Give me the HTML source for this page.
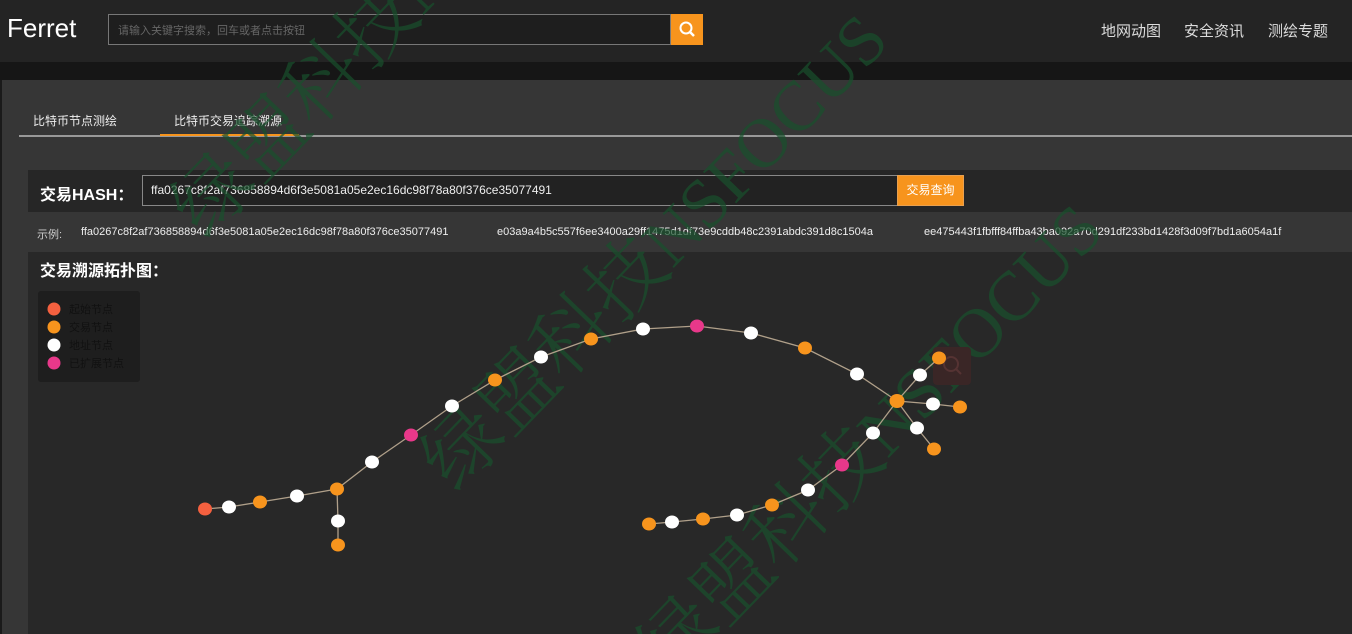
<!DOCTYPE html>
<html><head><meta charset="utf-8"><style>
*{margin:0;padding:0;box-sizing:border-box}
html,body{width:1352px;height:634px;overflow:hidden}
body{background:#363636;font-family:"Liberation Sans","Noto Sans CJK SC",sans-serif;position:relative;color:#fff}
.abs{position:absolute}
.hdr{left:0;top:0;width:1352px;height:62px;background:#242424}
.strip{left:0;top:62px;width:1352px;height:18px;background:#161616}
.lb{left:0;top:80px;width:2px;height:554px;background:#1a1a1a}
.wmw{position:absolute;left:0;top:0;width:1352px;height:634px;overflow:hidden;pointer-events:none}
.wm{position:absolute;font-family:"Liberation Serif","Noto Serif CJK SC",serif;font-size:78px;font-weight:300;color:rgba(24,80,44,0.7);white-space:nowrap;transform-origin:0 100%;transform:rotate(-46deg);line-height:1}
.wm span{font-size:70px}
</style></head><body>
<div class="abs hdr"></div>
<div class="abs" style="left:7px;top:13px;font-size:26px;color:#fff">Ferret</div>
<div class="abs" style="left:108px;top:14px;width:563px;height:31px;border:1px solid #777;background:#1e1e1e"></div>
<div class="abs" style="left:118px;top:22px;font-size:11px;color:#666">请输入关键字搜索，回车或者点击按钮</div>
<div class="abs" style="left:671px;top:14px;width:32px;height:31px;background:#f7941d"><svg width="32" height="31"><circle cx="15" cy="14" r="5.5" fill="none" stroke="#fff" stroke-width="2"/><line x1="19" y1="18" x2="23" y2="22" stroke="#fff" stroke-width="2.5"/></svg></div>
<div class="abs" style="left:1101px;top:20px;font-size:15px;color:#ddd">地网动图</div>
<div class="abs" style="left:1184px;top:20px;font-size:15px;color:#ddd">安全资讯</div>
<div class="abs" style="left:1268px;top:20px;font-size:15px;color:#ddd">测绘专题</div>
<div class="abs strip"></div>
<div class="abs lb"></div>
<div class="abs" style="left:33px;top:112px;font-size:12px;color:#eee">比特币节点测绘</div>
<div class="abs" style="left:174px;top:112px;font-size:12px;color:#eee">比特币交易追踪溯源</div>
<div class="abs" style="left:19px;top:135px;width:1333px;height:2px;background:#999"></div>
<div class="abs" style="left:160px;top:134px;width:139px;height:2px;background:#f7941d"></div>
<div class="abs" style="left:28px;top:170px;width:1324px;height:42px;background:#262626"></div>
<div class="abs" style="left:40px;top:181px;font-size:16px;font-weight:bold">交易HASH：</div>
<div class="abs" style="left:142px;top:175px;width:756px;height:31px;border:1px solid #888;background:#222"></div>
<div class="abs" style="left:151px;top:183px;font-size:12px;color:#eee">ffa0267c8f2af736858894d6f3e5081a05e2ec16dc98f78a80f376ce35077491</div>
<div class="abs" style="left:897px;top:175px;width:67px;height:31px;background:#f7941d;border:1px solid #e8a050;font-size:12px;text-align:center;line-height:29px">交易查询</div>
<div class="abs" style="left:37px;top:226px;font-size:11px;color:#ccc">示例:</div>
<div class="abs" style="left:81px;top:226px;font-size:11px;color:#eee">ffa0267c8f2af736858894d6f3e5081a05e2ec16dc98f78a80f376ce35077491</div>
<div class="abs" style="left:497px;top:226px;font-size:11px;color:#eee">e03a9a4b5c557f6ee3400a29ff1475d1df73e9cddb48c2391abdc391d8c1504a</div>
<div class="abs" style="left:924px;top:226px;font-size:11px;color:#eee">ee475443f1fbfff84ffba43ba092a70d291df233bd1428f3d09f7bd1a6054a1f</div>
<div class="abs" style="left:28px;top:252px;width:1324px;height:382px;background:#282828"></div>
<div class="abs" style="left:40px;top:257px;font-size:16px;font-weight:bold">交易溯源拓扑图：</div>
<div class="abs" style="left:38px;top:291px;width:102px;height:91px;background:#1e1e1e;border-radius:3px"></div>
<div class="wmw">
<div class="wm" style="left:215px;top:172px">绿盟科技<span>NSFOCUS</span></div>
<div class="wm" style="left:465px;top:425px">绿盟科技<span>NSFOCUS</span></div>
<div class="wm" style="left:680px;top:615px">绿盟科技<span>NSFOCUS</span></div>
</div>
<svg class="abs" style="left:0;top:0" width="1352" height="634">
<g font-size="11" fill="#111" font-family="Liberation Sans,Noto Sans CJK SC,sans-serif">
<circle cx="54" cy="309" r="6.5" fill="#f4603f"/><text x="69" y="313">起始节点</text>
<circle cx="54" cy="327" r="6.5" fill="#f7941d"/><text x="69" y="331">交易节点</text>
<circle cx="54" cy="345" r="6.5" fill="#fff"/><text x="69" y="349">地址节点</text>
<circle cx="54" cy="363" r="6.5" fill="#e8388a"/><text x="69" y="367">已扩展节点</text>
</g>
<rect x="933" y="347" width="38" height="38" rx="4" fill="#3a2626"/>
<circle cx="951" cy="364" r="7" fill="none" stroke="#553333" stroke-width="2"/><line x1="956" y1="369" x2="961" y2="374" stroke="#553333" stroke-width="2"/>
<g fill="none" stroke="#b0a08a" stroke-width="1.3">
<polyline points="205,509 229,507 260,502 297,496 337,489 372,462 411,435 452,406 495,380 541,357 591,339 643,329 697,326 751,333 805,348 857,374 897,401"/>
<polyline points="337,489 338,521 338,545"/>
<polyline points="897,401 920,375 939,358"/>
<polyline points="897,401 933,404 960,407"/>
<polyline points="897,401 917,428 934,449"/>
<polyline points="897,401 873,433 842,465 808,490 772,505 737,515 703,519 672,522 649,524"/>
</g>
<g>
<ellipse cx="205" cy="509" rx="7" ry="6.5" fill="#f4603f"/>
<ellipse cx="229" cy="507" rx="7" ry="6.5" fill="#fff"/>
<ellipse cx="260" cy="502" rx="7" ry="6.5" fill="#f7941d"/>
<ellipse cx="297" cy="496" rx="7" ry="6.5" fill="#fff"/>
<ellipse cx="337" cy="489" rx="7" ry="6.5" fill="#f7941d"/>
<ellipse cx="338" cy="521" rx="7" ry="6.5" fill="#fff"/>
<ellipse cx="338" cy="545" rx="7" ry="6.5" fill="#f7941d"/>
<ellipse cx="372" cy="462" rx="7" ry="6.5" fill="#fff"/>
<ellipse cx="411" cy="435" rx="7" ry="6.5" fill="#e8388a"/>
<ellipse cx="452" cy="406" rx="7" ry="6.5" fill="#fff"/>
<ellipse cx="495" cy="380" rx="7" ry="6.5" fill="#f7941d"/>
<ellipse cx="541" cy="357" rx="7" ry="6.5" fill="#fff"/>
<ellipse cx="591" cy="339" rx="7" ry="6.5" fill="#f7941d"/>
<ellipse cx="643" cy="329" rx="7" ry="6.5" fill="#fff"/>
<ellipse cx="697" cy="326" rx="7" ry="6.5" fill="#e8388a"/>
<ellipse cx="751" cy="333" rx="7" ry="6.5" fill="#fff"/>
<ellipse cx="805" cy="348" rx="7" ry="6.5" fill="#f7941d"/>
<ellipse cx="857" cy="374" rx="7" ry="6.5" fill="#fff"/>
<ellipse cx="897" cy="401" rx="7.5" ry="7" fill="#f7941d"/>
<ellipse cx="920" cy="375" rx="7" ry="6.5" fill="#fff"/>
<ellipse cx="939" cy="358" rx="7" ry="6.5" fill="#f7941d"/>
<ellipse cx="933" cy="404" rx="7" ry="6.5" fill="#fff"/>
<ellipse cx="960" cy="407" rx="7" ry="6.5" fill="#f7941d"/>
<ellipse cx="917" cy="428" rx="7" ry="6.5" fill="#fff"/>
<ellipse cx="934" cy="449" rx="7" ry="6.5" fill="#f7941d"/>
<ellipse cx="873" cy="433" rx="7" ry="6.5" fill="#fff"/>
<ellipse cx="842" cy="465" rx="7" ry="6.5" fill="#e8388a"/>
<ellipse cx="808" cy="490" rx="7" ry="6.5" fill="#fff"/>
<ellipse cx="772" cy="505" rx="7" ry="6.5" fill="#f7941d"/>
<ellipse cx="737" cy="515" rx="7" ry="6.5" fill="#fff"/>
<ellipse cx="703" cy="519" rx="7" ry="6.5" fill="#f7941d"/>
<ellipse cx="672" cy="522" rx="7" ry="6.5" fill="#fff"/>
<ellipse cx="649" cy="524" rx="7" ry="6.5" fill="#f7941d"/>
</g>
</svg>
</body></html>
